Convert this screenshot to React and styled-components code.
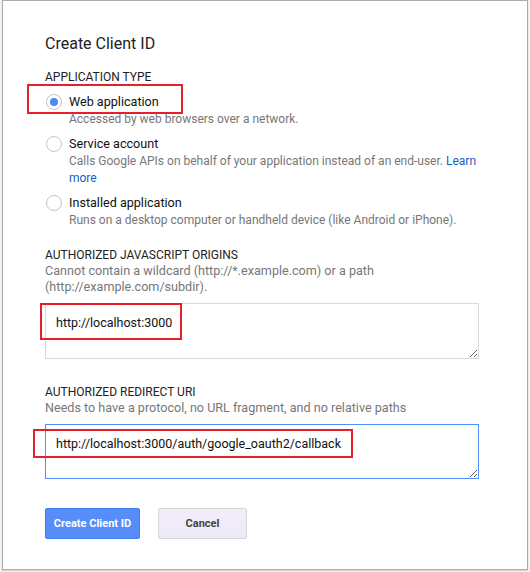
import styled, { createGlobalStyle } from 'styled-components';

const GlobalStyle = createGlobalStyle`
    html, body {
        margin: 0;
        padding: 0;
        background: #f3f3f3;
        font-family: Roboto, "Liberation Sans", Arial, sans-serif;
    }
`

const Page = styled.div`
    width: 530px;
    height: 572px;
    overflow: hidden;
    padding-left: 2px;
    box-sizing: border-box;
`

const Dialog = styled.section`
    position: relative;
    width: 526px;
    height: 570px;
    box-sizing: border-box;
    background: #fff;
    border: 1px solid #acacac;
    box-shadow: 0 1px 1px rgba(0, 0, 0, 0.12);
    padding: 31px 42px 0;
`

const Title = styled.h1`
    margin: 0;
    font-size: 16px;
    line-height: 24px;
    font-weight: 400;
    color: #222;
`

const SectionLabel = styled.div`
    margin-top: ${p => p.gap}px;
    font-size: 12px;
    line-height: 16px;
    color: #222;
    text-transform: uppercase;
`

const Hint = styled.div`
    font-size: 12.6px;
    line-height: 16px;
    color: #777;
    width: 420px;
`

const Options = styled.div`
    display: flex;
    flex-direction: column;
    gap: 7px;
    margin-top: 8px;
`

const Option = styled.label`
    display: grid;
    grid-template-columns: 24px 1fr;
    align-items: center;
    width: 433px;
`

const Radio = styled.span`
    width: 14px;
    height: 14px;
    margin-left: 1px;
    border-radius: 50%;
    border: 1px solid #c4c4c4;
    background: #fff;
    display: flex;
    align-items: center;
    justify-content: center;

    &::after {
        content: '';
        width: 8px;
        height: 8px;
        border-radius: 50%;
        background: ${p => p.checked ? '#4d88f5' : 'transparent'};
    }
`

const OptionName = styled.span`
    font-size: 12.6px;
    line-height: 18px;
    color: #111;
`

const OptionDesc = styled.span`
    grid-column: 2;
    font-size: 12px;
    line-height: 17px;
    color: #777;
`

const Link = styled.a`
    color: #1a5cc8;
    text-decoration: none;
`

const Field = styled.textarea`
    display: block;
    margin-top: 8px;
    width: 434px;
    height: ${p => p.h}px;
    box-sizing: border-box;
    border: 1px solid ${p => p.focused ? '#4d90fe' : '#d9d9d9'};
    outline: none;
    padding: 10px 10px;
    font-family: Roboto, "Liberation Sans", Arial, sans-serif;
    font-size: 12.5px;
    line-height: 18px;
    color: #111;
    background: #fff;
`

const Buttons = styled.div`
    display: flex;
    gap: 18px;
    margin-top: 29px;
`

const Button = styled.button`
    height: 31px;
    width: ${p => p.w}px;
    box-sizing: border-box;
    border-radius: 2px;
    font-family: Roboto, "Liberation Sans", Arial, sans-serif;
    font-size: 11px;
    font-weight: 700;
    padding: 0;
    border: 1px solid ${p => p.primary ? '#3f7ff0' : '#d6d6d6'};
    background: ${p => p.primary ? '#568df8' : 'linear-gradient(#f5ebfb, #e8ecf5)'};
    color: ${p => p.primary ? '#fff' : '#444'};
`

const Highlight = styled.div`
    position: absolute;
    border: 2px solid #e5202a;
    box-sizing: border-box;
    pointer-events: none;
`

const boxes = [
    { left: 24, top: 83, width: 156, height: 30 },
    { left: 37, top: 302, width: 142, height: 37 },
    { left: 30, top: 428, width: 320, height: 29 },
];

function App() {
    return (
        <Page>
            <GlobalStyle />
            <Dialog>
                <Title>Create Client ID</Title>

                <SectionLabel gap={13}>Application type</SectionLabel>
                <Options>
                    <Option>
                        <Radio checked />
                        <OptionName>Web application</OptionName>
                        <OptionDesc>Accessed by web browsers over a network.</OptionDesc>
                    </Option>
                    <Option>
                        <Radio />
                        <OptionName>Service account</OptionName>
                        <OptionDesc>
                            Calls Google APIs on behalf of your application instead of an end-user. <Link href="#">Learn more</Link>
                        </OptionDesc>
                    </Option>
                    <Option>
                        <Radio />
                        <OptionName>Installed application</OptionName>
                        <OptionDesc>Runs on a desktop computer or handheld device (like Android or iPhone).</OptionDesc>
                    </Option>
                </Options>

                <SectionLabel gap={18}>Authorized JavaScript origins</SectionLabel>
                <Hint>Cannot contain a wildcard (http://*.example.com) or a path (http://example.com/subdir).</Hint>
                <Field h={56} readOnly defaultValue="http://localhost:3000" />

                <SectionLabel gap={25}>Authorized redirect URI</SectionLabel>
                <Hint>Needs to have a protocol, no URL fragment, and no relative paths</Hint>
                <Field h={55} focused readOnly defaultValue="http://localhost:3000/auth/google_oauth2/callback" />

                <Buttons>
                    <Button primary w={95}>Create Client ID</Button>
                    <Button w={89}>Cancel</Button>
                </Buttons>

                {boxes.map((b, i) => (
                    <Highlight key={i} style={b} />
                ))}
            </Dialog>
        </Page>
    );
}

export default App;
